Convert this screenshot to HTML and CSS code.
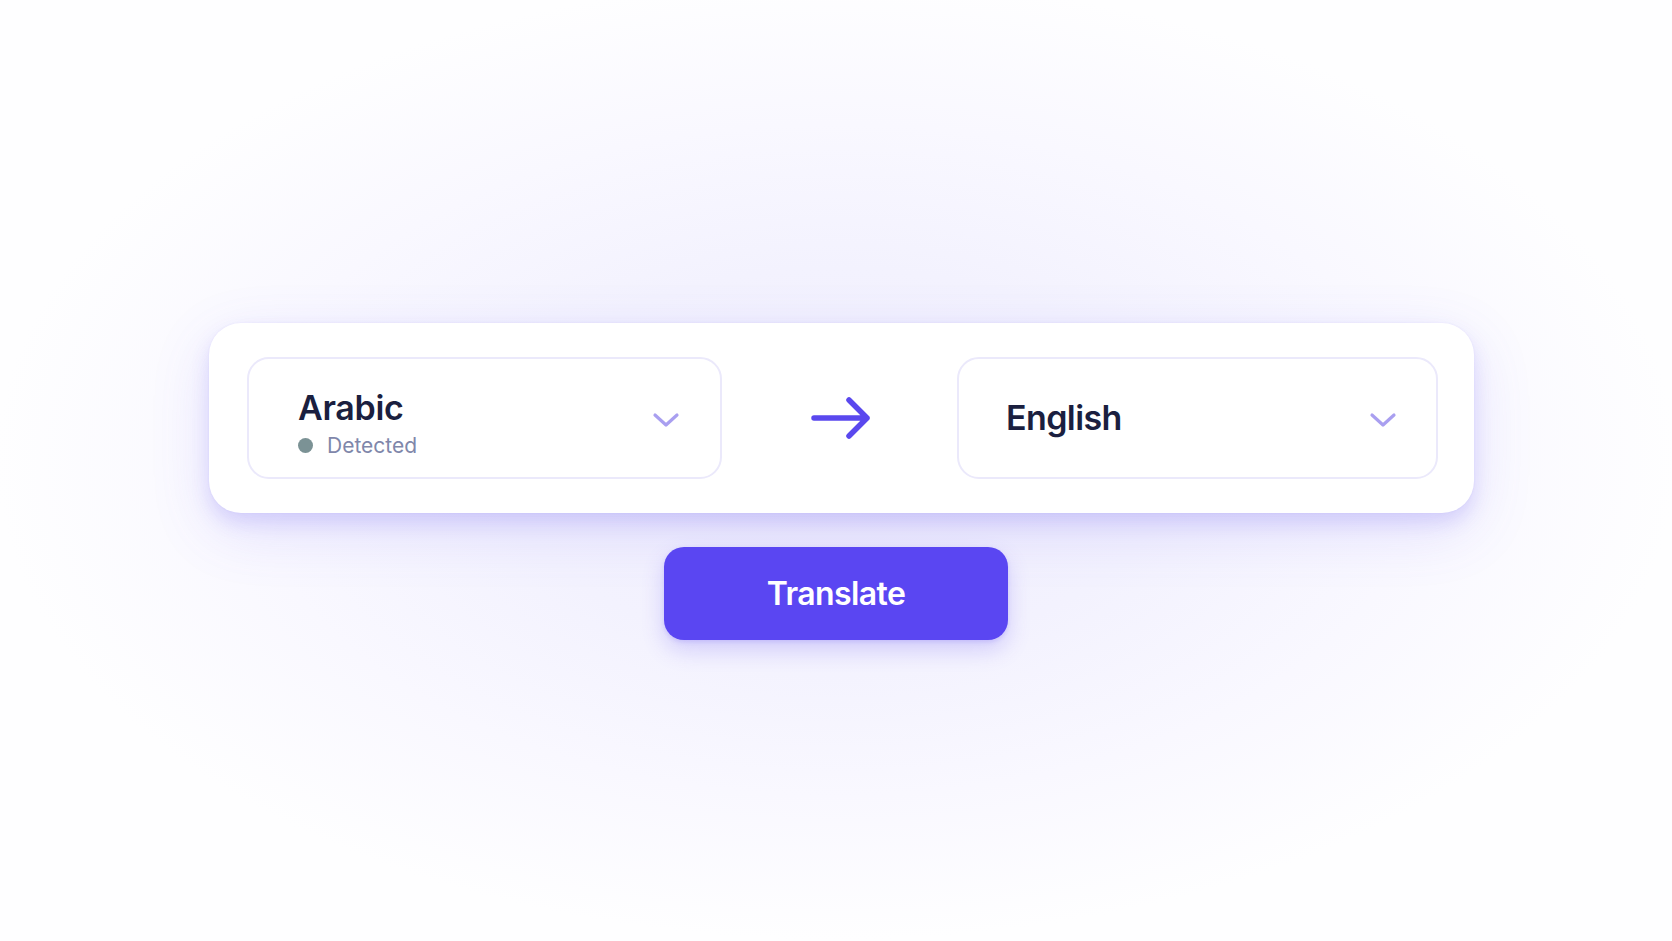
FILE: index.html
```html
<!DOCTYPE html>
<html lang="en">
<head>
<meta charset="utf-8">
<title>Translate</title>
<link rel="stylesheet" href="styles.css">
</head>
<body>
<main class="stage">
  <section class="card">
    <div class="lang-box lang-box--source">
      <div class="lang-text">
        <div class="lang-name">Arabic</div>
        <div class="detected"><span class="dot"></span><span>Detected</span></div>
      </div>
      <svg class="chevron" width="28" height="16" viewBox="0 0 28 16"><path d="M3 3 L14 13 L25 3" fill="none" stroke="#a99ff0" stroke-width="3.2" stroke-linecap="round" stroke-linejoin="round"/></svg>
    </div>
    <div class="arrow-wrap">
      <svg class="arrow" width="62" height="44" viewBox="0 0 62 44"><path d="M3 22 H56 M38 4 L56 22 L38 40" fill="none" stroke="#5a48ee" stroke-width="5.5" stroke-linecap="round" stroke-linejoin="round"/></svg>
    </div>
    <div class="lang-box lang-box--target">
      <div class="lang-text">
        <div class="lang-name">English</div>
      </div>
      <svg class="chevron" width="28" height="16" viewBox="0 0 28 16"><path d="M3 3 L14 13 L25 3" fill="none" stroke="#a99ff0" stroke-width="3.2" stroke-linecap="round" stroke-linejoin="round"/></svg>
    </div>
  </section>
  <button class="translate-btn" type="button">Translate</button>
</main>
</body>
</html>
```

FILE: styles.css
```css
html, body {
  margin: 0;
  padding: 0;
}

body {
  width: 1672px;
  height: 941px;
  overflow: hidden;
  font-family: "Inter", "Lato", "Liberation Sans", sans-serif;
  background:
    radial-gradient(ellipse 840px 480px at 836px 460px, #efedfd 0%, #f3f2fe 40%, #f9f8ff 70%, #fefeff 100%);
  background-color: #fefeff;
}

.stage {
  display: flex;
  flex-direction: column;
  align-items: center;
  padding-top: 323px;
}

.card {
  box-sizing: border-box;
  width: 1265px;
  height: 190px;
  margin-left: 11px;
  padding: 34px 36px 34px 38px;
  display: flex;
  align-items: center;
  background: #ffffff;
  border-radius: 32px;
  box-shadow:
    0 10px 18px rgba(104, 86, 240, 0.17),
    0 18px 60px rgba(104, 86, 240, 0.15),
    0 0 2px rgba(104, 86, 240, 0.10);
}

.lang-box {
  box-sizing: border-box;
  height: 122px;
  display: flex;
  align-items: center;
  justify-content: space-between;
  border: 2px solid #ebe9fb;
  border-radius: 22px;
  padding: 0 40px 0 49px;
  background: #fff;
}

.lang-box--source {
  width: 475px;
}

.lang-box--source .lang-text {
  padding-top: 10px;
}

.lang-box--target {
  width: 481px;
  padding-right: 39px;
  padding-left: 47px;
}

.lang-text {
  display: flex;
  flex-direction: column;
}

.lang-name {
  font-size: 34px;
  font-weight: 600;
  color: #1b1f3f;
  letter-spacing: -0.3px;
  line-height: 40px;
}

.lang-box--target .lang-name {
  letter-spacing: -0.6px;
}

.detected {
  display: flex;
  align-items: center;
  gap: 14px;
  margin-top: 5px;
  font-size: 21px;
  font-weight: 400;
  color: #7f87aa;
  line-height: 26px;
}

.dot {
  width: 15px;
  height: 15px;
  border-radius: 50%;
  background: #7b9295;
}

.chevron {
  display: block;
  margin-top: 4px;
}

.arrow-wrap {
  flex: 1;
  display: flex;
  justify-content: center;
  align-items: center;
  padding-left: 5px;
}

.arrow {
  display: block;
}

.translate-btn {
  margin-top: 34px;
  width: 344px;
  height: 93px;
  border: none;
  border-radius: 20px;
  background: #5a46f2;
  color: #ffffff;
  font-family: "Inter", "Lato", "Liberation Sans", sans-serif;
  font-size: 32px;
  font-weight: 600;
  letter-spacing: -0.6px;
  box-shadow:
    0 10px 22px rgba(90, 70, 240, 0.22),
    0 2px 4px rgba(90, 70, 240, 0.15);
  cursor: pointer;
}
```
